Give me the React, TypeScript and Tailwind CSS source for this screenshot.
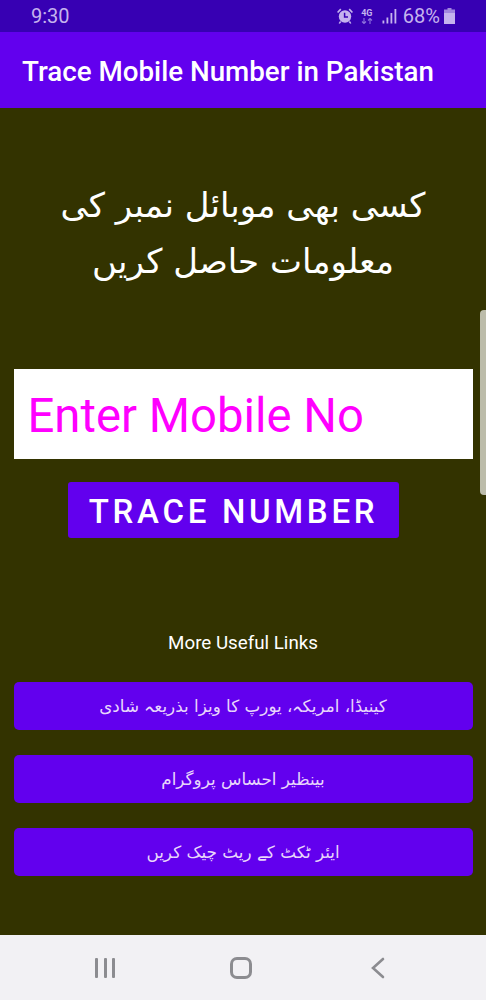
const URDU = "font-['DejaVu_Sans',sans-serif]";

const LINKS = [
  "کینیڈا، امریکہ، یورپ کا ویزا بذریعہ شادی",
  "بینظیر احساس پروگرام",
  "ایئر ٹکٹ کے ریٹ چیک کریں",
];

function StatusIcons() {
  return (
    <div className="flex items-center text-[#c5b3ee]">
      {/* alarm */}
      <svg width="18" height="18" viewBox="0 0 18 18" className="mr-[6px]" fill="currentColor">
        <circle cx="9" cy="9.5" r="6.2" />
        <path d="M1 5 4.2 1.6 5.4 2.7 2.2 6.1ZM17 5 13.8 1.6 12.6 2.7 15.8 6.1Z" />
        <path d="M4 14 2.6 16.2 3.8 16.8 5.4 15ZM14 14 15.4 16.2 14.2 16.8 12.6 15Z" />
        <path d="M8.6 5.8v4.2h3.4" fill="none" stroke="#3700b3" strokeWidth="1.5" />
      </svg>
      {/* 4G */}
      <div className="mr-[8px] flex w-[14px] flex-col items-center">
        <span className="text-[9px] font-bold leading-[10px]">4G</span>
        <svg width="12" height="6" viewBox="0 0 12 6" className="text-[#8f73dc]" fill="none" stroke="currentColor" strokeWidth="1.1">
          <path d="M3 0v5.5M1 3.5l2 2 2-2M9 6V.5M7 2.5l2-2 2 2" />
        </svg>
      </div>
      {/* signal */}
      <svg width="15" height="16" viewBox="0 0 15 16" className="mr-[6px]" fill="currentColor">
        <rect x="0.5" y="12.5" width="1.8" height="3" />
        <rect x="4.5" y="9.5" width="1.8" height="6" />
        <rect x="8.5" y="5" width="1.8" height="10.5" />
        <rect x="12.5" y="1" width="1.8" height="14.5" />
      </svg>
      <span className="font-['Roboto',sans-serif] text-[20px] leading-none">68%</span>
      {/* battery */}
      <svg width="11" height="16" viewBox="0 0 11 16" className="ml-[4px]" fill="currentColor">
        <path d="M3.5 0h4v1.5h3.5V16H0V1.5h3.5Z" opacity="0.75" />
        <rect y="5" width="11" height="11" />
      </svg>
    </div>
  );
}

export default function App() {
  return (
    <div className="relative flex h-[1000px] w-[486px] flex-col overflow-hidden bg-[#333300] font-['Roboto',sans-serif]">
      <div className="flex h-[32px] shrink-0 items-center justify-between bg-[#3700b3] pl-[31px] pr-[31px]">
        <span className="text-[20px] leading-none text-[#c5b3ee]">9:30</span>
        <StatusIcons />
      </div>

      <div className="flex h-[76px] shrink-0 items-center bg-[#6200ee] pl-[22px] pt-[3px]">
        <h1 className="text-[27.75px] font-medium leading-none text-white">Trace Mobile Number in Pakistan</h1>
      </div>

      <main className="flex flex-1 flex-col items-center">
        <p dir="rtl" className={`${URDU} mt-[69px] w-[400px] text-center text-[34px] leading-[56px] text-white`}>
          کسی بھی موبائل نمبر کی معلومات حاصل کریں
        </p>

        <div className="mt-[80px] flex h-[90px] w-[459px] items-center bg-white pl-[14px] pt-[5px] text-[47.25px] leading-none text-[#ff00ff]">
          Enter Mobile No
        </div>

        <button className="mt-[23px] ml-[68px] h-[56px] w-[331px] self-start rounded-[3px] bg-[#6200ee] pt-[3px] text-[33px] font-medium leading-none tracking-[3.7px] text-white">
          TRACE NUMBER
        </button>

        <p className="mt-[94px] text-[18.75px] leading-[22px] text-white">More Useful Links</p>

        <div className="mt-[28px] flex flex-col gap-[25px]">
          {LINKS.map((link) => (
            <button
              key={link}
              dir="rtl"
              className={`${URDU} h-[48px] w-[459px] rounded-[5px] bg-[#6200ee] text-[16.8px] leading-none text-[#e8d6fb]`}
            >
              {link}
            </button>
          ))}
        </div>
      </main>

      <nav className="flex h-[65px] shrink-0 items-center bg-[#f2f1f4] pl-[95px] pr-[101px] text-[#8c8c90]">
        <div className="flex w-[22px] gap-[5.5px]">
          <div className="h-[20px] w-[3px] rounded-[1px] bg-current" />
          <div className="h-[20px] w-[3px] rounded-[1px] bg-current" />
          <div className="h-[20px] w-[3px] rounded-[1px] bg-current" />
        </div>
        <div className="ml-[113px] h-[22px] w-[22px] rounded-[7px] border-[3px] border-current" />
        <svg width="14" height="22" viewBox="0 0 14 22" className="ml-auto" fill="none" stroke="currentColor" strokeWidth="2.6" strokeLinecap="round">
          <path d="M12 2 2 11l10 9" />
        </svg>
      </nav>

      {/* scroll handle */}
      <div className="absolute left-[480px] top-[310px] h-[185px] w-[6px] rounded-l-[4px] bg-[#bcbcaa]" />
    </div>
  );
}
